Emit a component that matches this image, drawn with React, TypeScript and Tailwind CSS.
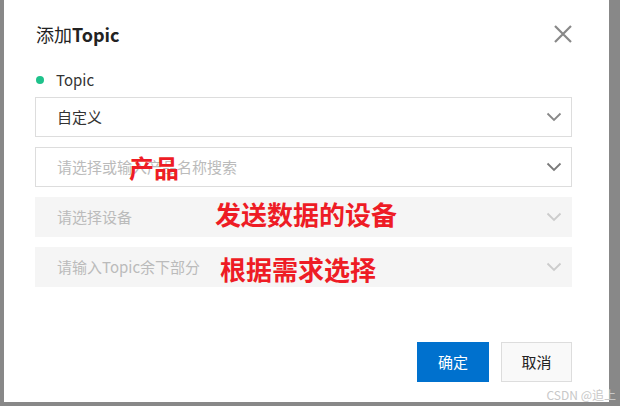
import React from "react";

const Chevron = ({ color }: { color: string }) => (
  <svg width="16" height="10" viewBox="0 0 16 10" fill="none">
    <path d="M1.5 1.5 L8 8 L14.5 1.5" stroke={color} strokeWidth="1.8" />
  </svg>
);

export default function App() {
  const font = { fontFamily: '"Noto Sans CJK SC", "Noto Sans", sans-serif' };
  return (
    <div
      className="w-[620px] h-[406px] bg-[#888888] pl-[4px] pr-[11px] pb-[4px] overflow-hidden relative"
      style={font}
    >
      <div className="bg-white h-full flex flex-col pl-[31px] pr-[37px]">
        <div className="flex items-center justify-between h-[68px]">
          <div className="text-[18px] leading-[24px] text-[#222] pl-[1px]">
            添加<span className="font-semibold">Topic</span>
          </div>
          <svg width="20" height="20" viewBox="0 0 20 20" className="mr-[-1px]">
            <path d="M2 2 L18 18 M18 2 L2 18" stroke="#888" strokeWidth="2.2" />
          </svg>
        </div>
        <div className="flex items-center gap-[12px] h-[24px] pl-[1px]">
          <span className="w-[8px] h-[8px] shrink-0 rounded-full bg-[#1ec28b]" />
          <span className="text-[15px] leading-[20px] text-[#333]">Topic</span>
        </div>
        <div className="flex flex-col gap-[10px] mt-[5px]">
          <div className="h-[40px] border border-[#dddddd] flex items-center justify-between pl-[21px] pr-[9px]">
            <span className="text-[15px] text-[#333]">自定义</span>
            <Chevron color="#888" />
          </div>
          <div className="relative h-[40px] border border-[#dddddd] flex items-center justify-between pl-[21px] pr-[9px]">
            <span className="text-[15px] text-[#bbbbbb]">请选择或输入产品名称搜索</span>
            <Chevron color="#7a7a7a" />
            <span className="absolute left-[93px] top-[3px] text-[25px] leading-[32px] font-bold text-[#ee1c25]">
              产品
            </span>
          </div>
          <div className="relative h-[40px] bg-[#f5f5f5] flex items-center justify-between pl-[22px] pr-[10px]">
            <span className="text-[15px] text-[#bbbbbb]">请选择设备</span>
            <Chevron color="#cccccc" />
            <span className="absolute left-[180px] top-[1px] text-[26px] leading-[32px] font-bold text-[#ee1c25]">
              发送数据的设备
            </span>
          </div>
          <div className="relative h-[40px] bg-[#f5f5f5] flex items-center justify-between pl-[22px] pr-[10px]">
            <span className="text-[15px] text-[#bbbbbb]">请输入Topic余下部分</span>
            <Chevron color="#cccccc" />
            <span className="absolute left-[185px] top-[6px] text-[26px] leading-[32px] font-bold text-[#ee1c25]">
              根据需求选择
            </span>
          </div>
        </div>
        <div className="flex justify-end gap-[12px] mt-[55px]">
          <button className="w-[72px] h-[40px] bg-[#0071ce] text-white text-[15px]">确定</button>
          <button className="w-[71px] h-[40px] bg-[#f9f9f9] border border-[#dddddd] text-[#222] text-[15px]">
            取消
          </button>
        </div>
      </div>
      <span className="absolute right-[4px] bottom-[3px] text-[12px] leading-[16px] text-[#c8c8c8]">
        CSDN @追上
      </span>
    </div>
  );
}
